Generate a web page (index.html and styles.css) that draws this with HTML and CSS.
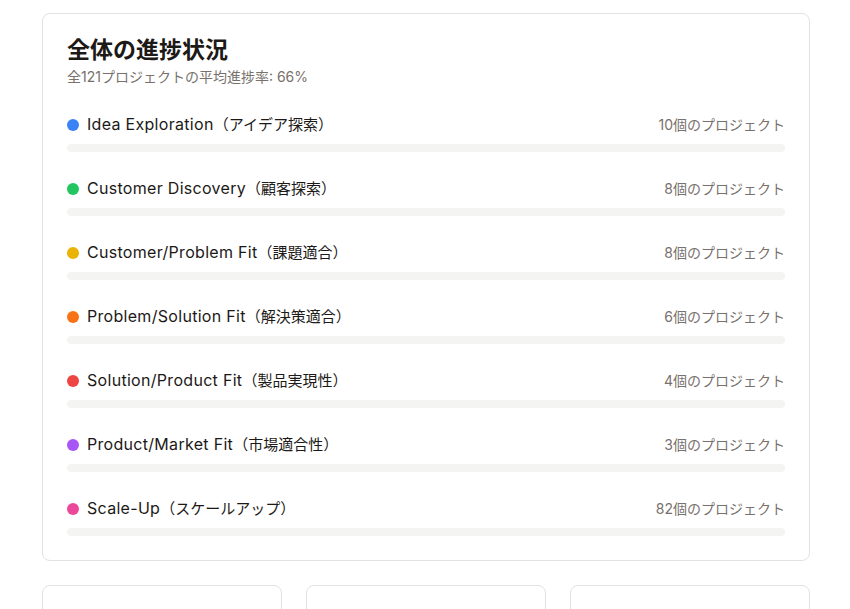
FILE: index.html
```html
<!DOCTYPE html>
<html lang="ja">
<head>
<meta charset="utf-8">
<link rel="stylesheet" href="styles.css">
</head>
<body>
<main class="page">
  <section class="card overview">
    <header class="overview-head">
      <h1 class="title">全体の進捗状況</h1>
      <p class="subtitle">全121プロジェクトの平均進捗率: 66%</p>
    </header>
    <div class="stages">
      <div class="stage">
        <div class="stage-row">
          <div class="stage-name"><span class="dot dot-blue"></span><span><span class="en">Idea Exploration</span>（アイデア探索）</span></div>
          <span class="stage-count">10個のプロジェクト</span>
        </div>
        <div class="bar"></div>
      </div>
      <div class="stage">
        <div class="stage-row">
          <div class="stage-name"><span class="dot dot-green"></span><span><span class="en">Customer Discovery</span>（顧客探索）</span></div>
          <span class="stage-count">8個のプロジェクト</span>
        </div>
        <div class="bar"></div>
      </div>
      <div class="stage">
        <div class="stage-row">
          <div class="stage-name"><span class="dot dot-yellow"></span><span><span class="en">Customer/Problem Fit</span>（課題適合）</span></div>
          <span class="stage-count">8個のプロジェクト</span>
        </div>
        <div class="bar"></div>
      </div>
      <div class="stage">
        <div class="stage-row">
          <div class="stage-name"><span class="dot dot-orange"></span><span><span class="en">Problem/Solution Fit</span>（解決策適合）</span></div>
          <span class="stage-count">6個のプロジェクト</span>
        </div>
        <div class="bar"></div>
      </div>
      <div class="stage">
        <div class="stage-row">
          <div class="stage-name"><span class="dot dot-red"></span><span><span class="en">Solution/Product Fit</span>（製品実現性）</span></div>
          <span class="stage-count">4個のプロジェクト</span>
        </div>
        <div class="bar"></div>
      </div>
      <div class="stage">
        <div class="stage-row">
          <div class="stage-name"><span class="dot dot-purple"></span><span><span class="en">Product/Market Fit</span>（市場適合性）</span></div>
          <span class="stage-count">3個のプロジェクト</span>
        </div>
        <div class="bar"></div>
      </div>
      <div class="stage">
        <div class="stage-row">
          <div class="stage-name"><span class="dot dot-pink"></span><span><span class="en">Scale-Up</span>（スケールアップ）</span></div>
          <span class="stage-count">82個のプロジェクト</span>
        </div>
        <div class="bar"></div>
      </div>
    </div>
  </section>
  <div class="grid">
    <section class="card small"></section>
    <section class="card small"></section>
    <section class="card small"></section>
  </div>
</main>
</body>
</html>
```
FILE: styles.css
```css
* { box-sizing: border-box; }
html, body { margin: 0; padding: 0; background: #ffffff; }
body {
  font-family: Inter, "Noto Sans CJK JP", sans-serif;
  color: #1c1917;
  overflow: hidden;
}
.page {
  width: 768px;
  margin-left: 42px;
  padding-top: 13px;
  display: flex;
  flex-direction: column;
  gap: 24px;
}
.card {
  background: #fff;
  border: 1px solid #e2e2e2;
  border-radius: 8px;
}
.overview { padding: 24px; }
.overview-head { margin-bottom: 25px; }
.title {
  margin: 0;
  font-size: 23px;
  line-height: 24px;
  font-weight: 700;
  color: #1c1917;
}
.subtitle {
  margin: 5px 0 0;
  font-size: 14px;
  line-height: 20px;
  color: #78716c;
}
.stages { display: flex; flex-direction: column; gap: 24px; }
.stage-row {
  display: flex;
  justify-content: space-between;
  align-items: center;
  height: 24px;
  padding-top: 1px;
  margin-bottom: 8px;
}
.stage-name {
  display: flex;
  align-items: center;
  gap: 8px;
  font-size: 15px;
  line-height: 21px;
  color: #1c1917;
}
.en {
  font-size: 16px;
  letter-spacing: 0.3px;
}
.dot { width: 12px; height: 12px; border-radius: 50%; flex: none; }
.dot-blue { background: #3b82f6; }
.dot-green { background: #22c55e; }
.dot-yellow { background: #eab308; }
.dot-orange { background: #f97316; }
.dot-red { background: #ef4444; }
.dot-purple { background: #a855f7; }
.dot-pink { background: #ec4899; }
.stage-count {
  font-size: 14px;
  line-height: 21px;
  color: #78716c;
}
.bar {
  height: 8px;
  border-radius: 9999px;
  background: #f4f4f3;
}
.grid {
  display: grid;
  grid-template-columns: repeat(3, 1fr);
  gap: 24px;
}
.small { height: 120px; }
```
